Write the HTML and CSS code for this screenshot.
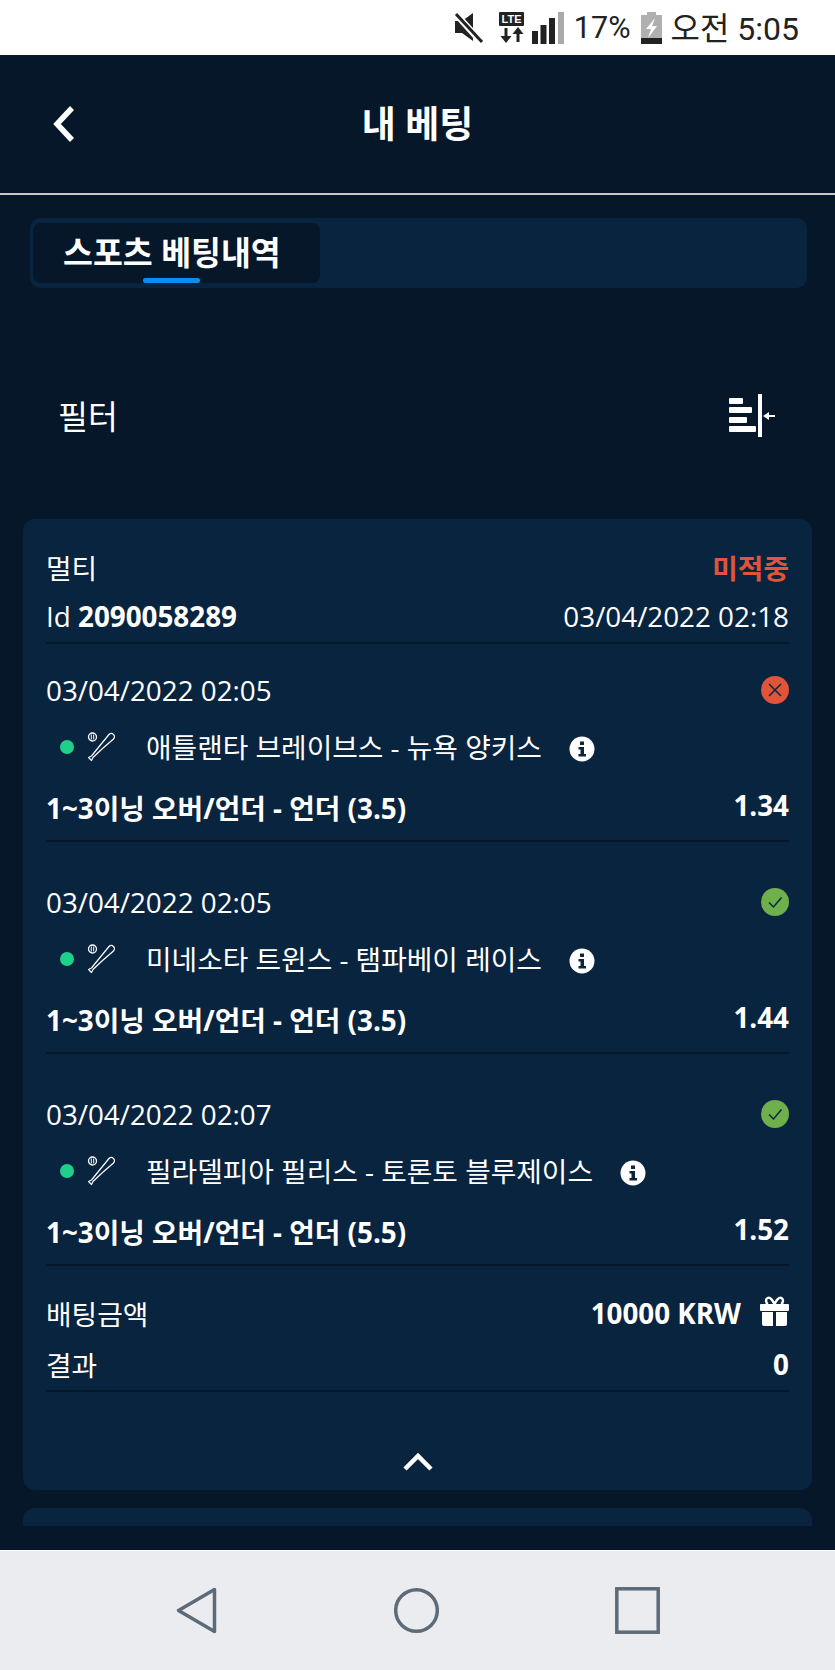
FILE: index.html
```html
<!DOCTYPE html>
<html lang="ko">
<head>
    <meta charset="UTF-8">
    <meta name="viewport" content="width=device-width, initial-scale=1.0">
    <title>내 베팅</title>
    <link rel="stylesheet" href="styles.css">
</head>
<body>
    <div class="status-bar">
        <svg class="ic-mute" width="30" height="32" viewBox="0 0 30 32">
            <path d="M1 9h7l11-8v28L8 21H1z" fill="#222"/>
            <path d="M1 1l27 30" stroke="#fff" stroke-width="6.500"/>
            <path d="M2 2l26 28" stroke="#222" stroke-width="3"/>
        </svg>
        <svg class="ic-lte" width="26" height="32" viewBox="0 0 26 32">
            <rect x="0" y="0" width="25" height="14" rx="1" fill="#222"/>
            <text x="12.500" y="11" class="lte-text" text-anchor="middle">LTE</text>
            <path d="M7 16v10" stroke="#222" stroke-width="3"/>
            <path d="M1.500 24h11L7 31z" fill="#222"/>
            <path d="M19 30V20" stroke="#222" stroke-width="3"/>
            <path d="M13.500 22h11L19 15z" fill="#222"/>
        </svg>
        <svg class="ic-signal" width="32" height="32" viewBox="0 0 32 32">
            <rect x="0" y="19" width="6" height="13" fill="#222"/>
            <rect x="8.500" y="13" width="6" height="19" fill="#222"/>
            <rect x="17" y="6" width="6" height="26" fill="#222"/>
            <rect x="26" y="0" width="6" height="32" fill="#aaa"/>
        </svg>
        <span class="status-pct">17%</span>
        <svg class="ic-batt" width="21" height="32" viewBox="0 0 21 32">
            <path d="M6 0h9v3h6v29H0V3h6z" fill="#b0b0b0"/>
            <rect x="0" y="26" width="21" height="6" fill="#222"/>
            <path d="M14 6L5 17h5l-3 9 9-12h-5z" fill="#fff"/>
        </svg>
        <span class="status-time">오전 5:05</span>
    </div>

    <div class="app">
        <div class="top-bar">
            <svg class="back-btn" width="24" height="38" viewBox="0 0 24 38">
                <path d="M20 3L5 19l15 16" fill="none" stroke="#fff" stroke-width="5.500"/>
            </svg>
            <h1 class="page-title">내 베팅</h1>
        </div>

        <div class="tabs">
            <div class="tab active">스포츠 베팅내역</div>
        </div>

        <div class="filter-row">
            <span class="filter-label">필터</span>
            <svg width="46" height="43" viewBox="0 0 46 43">
                <rect x="0" y="4" width="14" height="6" rx="1" fill="#fff"/>
                <rect x="0" y="13" width="23" height="6" rx="1" fill="#fff"/>
                <rect x="0" y="23" width="18" height="6" rx="1" fill="#fff"/>
                <rect x="0" y="32" width="27" height="6" rx="1" fill="#fff"/>
                <rect x="29" y="0" width="4" height="43" fill="#fff"/>
                <path d="M38 22h8" stroke="#fff" stroke-width="2"/>
                <path d="M34 22l6-4v8z" fill="#fff"/>
            </svg>
        </div>

        <div class="bet-list">
            <div class="card">
                <div class="card-head">
                    <div class="row">
                        <span>멀티</span>
                        <span class="lost-label">미적중</span>
                    </div>
                    <div class="row row-id">
                        <span>Id <b>2090058289</b></span>
                        <span>03/04/2022 02:18</span>
                    </div>
                </div>

                <div class="selection">
                    <div class="row">
                        <span>03/04/2022 02:05</span>
                        <svg class="result-ic" width="28" height="28" viewBox="0 0 28 28">
                            <circle cx="14" cy="14" r="14" fill="#e0553a"/>
                            <path d="M8 8l12 12M20 8L8 20" stroke="#0a2540" stroke-width="1.500"/>
                        </svg>
                    </div>
                    <div class="match">
                        <i class="live-dot"></i>
                        <svg class="bat-ic" width="30" height="32" viewBox="0 0 30 32">
                            <circle cx="5.500" cy="6" r="4" fill="none" stroke="#fff" stroke-width="1.300"/>
                            <path d="M4.300 3.500v5M6.700 3.500v5" stroke="#fff" stroke-width="1"/>
                            <path d="M1.500 26.500L4.500 25 13 14.500 22 3.500c1.500-1.500 3.500-1 4.500 0s1.500 3 0 4.500L15.500 17.500 6 26.500 4.500 29.500z" fill="none" stroke="#fff" stroke-width="1.200" stroke-linejoin="round"/>
                        </svg>
                        <span class="match-name">애틀랜타 브레이브스 - 뉴욕 양키스</span>
                        <svg class="info-ic" width="26" height="26" viewBox="0 0 26 26">
                            <circle cx="13" cy="13" r="12.500" fill="#fff"/>
                            <rect x="11" y="5.500" width="4" height="3.500" fill="#0a2540"/>
                            <path d="M9.500 11h5.500v7h2v2.500H9.500V18h2v-4.500h-2z" fill="#0a2540"/>
                        </svg>
                    </div>
                    <div class="row row-market">
                        <span>1~3이닝 오버/언더 - 언더 (3.5)</span>
                        <span class="odds">1.34</span>
                    </div>
                </div>

                <div class="selection">
                    <div class="row">
                        <span>03/04/2022 02:05</span>
                        <svg class="result-ic" width="28" height="28" viewBox="0 0 28 28">
                            <circle cx="14" cy="14" r="14" fill="#6fb04d"/>
                            <path d="M8 14.500l4.500 4.500L20.500 9.500" fill="none" stroke="#0a2540" stroke-width="1.500"/>
                        </svg>
                    </div>
                    <div class="match">
                        <i class="live-dot"></i>
                        <svg class="bat-ic" width="30" height="32" viewBox="0 0 30 32">
                            <circle cx="5.500" cy="6" r="4" fill="none" stroke="#fff" stroke-width="1.300"/>
                            <path d="M4.300 3.500v5M6.700 3.500v5" stroke="#fff" stroke-width="1"/>
                            <path d="M1.500 26.500L4.500 25 13 14.500 22 3.500c1.500-1.500 3.500-1 4.500 0s1.500 3 0 4.500L15.500 17.500 6 26.500 4.500 29.500z" fill="none" stroke="#fff" stroke-width="1.200" stroke-linejoin="round"/>
                        </svg>
                        <span class="match-name">미네소타 트윈스 - 탬파베이 레이스</span>
                        <svg class="info-ic" width="26" height="26" viewBox="0 0 26 26">
                            <circle cx="13" cy="13" r="12.500" fill="#fff"/>
                            <rect x="11" y="5.500" width="4" height="3.500" fill="#0a2540"/>
                            <path d="M9.500 11h5.500v7h2v2.500H9.500V18h2v-4.500h-2z" fill="#0a2540"/>
                        </svg>
                    </div>
                    <div class="row row-market">
                        <span>1~3이닝 오버/언더 - 언더 (3.5)</span>
                        <span class="odds">1.44</span>
                    </div>
                </div>

                <div class="selection last">
                    <div class="row">
                        <span>03/04/2022 02:07</span>
                        <svg class="result-ic" width="28" height="28" viewBox="0 0 28 28">
                            <circle cx="14" cy="14" r="14" fill="#6fb04d"/>
                            <path d="M8 14.500l4.500 4.500L20.500 9.500" fill="none" stroke="#0a2540" stroke-width="1.500"/>
                        </svg>
                    </div>
                    <div class="match">
                        <i class="live-dot"></i>
                        <svg class="bat-ic" width="30" height="32" viewBox="0 0 30 32">
                            <circle cx="5.500" cy="6" r="4" fill="none" stroke="#fff" stroke-width="1.300"/>
                            <path d="M4.300 3.500v5M6.700 3.500v5" stroke="#fff" stroke-width="1"/>
                            <path d="M1.500 26.500L4.500 25 13 14.500 22 3.500c1.500-1.500 3.500-1 4.500 0s1.500 3 0 4.500L15.500 17.500 6 26.500 4.500 29.500z" fill="none" stroke="#fff" stroke-width="1.200" stroke-linejoin="round"/>
                        </svg>
                        <span class="match-name">필라델피아 필리스 - 토론토 블루제이스</span>
                        <svg class="info-ic" width="26" height="26" viewBox="0 0 26 26">
                            <circle cx="13" cy="13" r="12.500" fill="#fff"/>
                            <rect x="11" y="5.500" width="4" height="3.500" fill="#0a2540"/>
                            <path d="M9.500 11h5.500v7h2v2.500H9.500V18h2v-4.500h-2z" fill="#0a2540"/>
                        </svg>
                    </div>
                    <div class="row row-market">
                        <span>1~3이닝 오버/언더 - 언더 (5.5)</span>
                        <span class="odds">1.52</span>
                    </div>
                </div>

                <div class="summary">
                    <div class="row">
                        <span>배팅금액</span>
                        <span class="stake">
                            <b>10000 KRW</b>
                            <svg width="29" height="30" viewBox="0 0 29 30">
                                <path d="M14.500 8C12 3 9.500 1 7.500 2S5.500 7 8 8M14.500 8c2.500-5 5-7 7-6s2 5-.5 6" fill="none" stroke="#fff" stroke-width="2.500"/>
                                <rect x="0" y="8" width="29" height="7" rx="1" fill="#fff"/>
                                <path d="M2 16h11v14H4a2 2 0 0 1-2-2zM16 16h11v12a2 2 0 0 1-2 2h-9z" fill="#fff"/>
                            </svg>
                        </span>
                    </div>
                    <div class="row row-result">
                        <span>결과</span>
                        <b>0</b>
                    </div>
                </div>

                <div class="toggle">
                    <svg width="30" height="20" viewBox="0 0 30 20">
                        <path d="M2 17L15 4l13 13" fill="none" stroke="#fff" stroke-width="4.500"/>
                    </svg>
                </div>
            </div>

            <div class="card card-next"></div>
        </div>
    </div>

    <div class="nav-bar">
        <svg width="41" height="47" viewBox="0 0 41 47">
            <path d="M38.500 2.500v42L2.500 23.500z" fill="none" stroke="#5c6b77" stroke-width="3.500" stroke-linejoin="round"/>
        </svg>
        <svg width="45" height="47" viewBox="0 0 45 47">
            <circle cx="22.500" cy="23.500" r="20.800" fill="none" stroke="#5c6b77" stroke-width="3.500"/>
        </svg>
        <svg width="45" height="47" viewBox="0 0 45 47">
            <rect x="1.800" y="1.800" width="41.400" height="43.400" fill="none" stroke="#5c6b77" stroke-width="3.500"/>
        </svg>
    </div>
</body>
</html>
```

FILE: styles.css
```css
* {
    box-sizing: border-box;
}

body {
    margin: 0;
    width: 835px;
    height: 1670px;
    overflow: hidden;
    display: flex;
    flex-direction: column;
    font-family: "Open Sans", "Noto Sans CJK KR", sans-serif;
    background: #051728;
    color: #fff;
}

/* phone status bar */
.status-bar {
    height: 55px;
    flex: none;
    background: #fff;
    color: #222;
    display: flex;
    align-items: center;
    justify-content: flex-end;
    padding-right: 36px;
    font-family: Roboto, "Noto Sans CJK KR", sans-serif;
    font-size: 30.500px;
}

.status-time {
    font-size: 32px;
    margin-bottom: 3px;
}

.ic-mute {
    margin-right: 15px;
}

.ic-lte {
    margin-right: 7px;
}

.lte-text {
    font-family: "Liberation Sans", sans-serif;
    font-size: 11px;
    font-weight: 700;
    fill: #fff;
}

.ic-signal {
    margin-right: 10px;
}

.ic-batt {
    margin: 0 8px 0 11px;
}

.app {
    flex: 1;
    display: flex;
    flex-direction: column;
    min-height: 0;
}

/* header */
.top-bar {
    height: 140px;
    flex: none;
    border-bottom: 2px solid #c8c8c8;
    display: flex;
    align-items: center;
    justify-content: center;
    position: relative;
}

.back-btn {
    position: absolute;
    left: 52px;
    top: 50px;
}

.page-title {
    margin: 0 0 4px;
    font-size: 37px;
    font-weight: 700;
}

/* tabs */
.tabs {
    height: 70px;
    flex: none;
    margin: 23px 28px 0 30px;
    padding: 5px 3px;
    background: #09243f;
    border-radius: 10px;
}

.tab {
    width: 287px;
    height: 60px;
    padding: 0 0 4px 30px;
    background: #051728;
    border-radius: 8px;
    display: flex;
    align-items: center;
    font-size: 32.500px;
    font-weight: 700;
    position: relative;
}

.tab.active::after {
    content: "";
    position: absolute;
    left: 110px;
    bottom: 0;
    width: 57px;
    height: 5px;
    background: #0a8cf0;
    border-radius: 2px;
}

/* filter */
.filter-row {
    height: 90px;
    flex: none;
    margin-top: 82px;
    padding: 0 60px 0 58px;
    display: flex;
    align-items: center;
    justify-content: space-between;
}

.filter-label {
    font-size: 32.500px;
}

/* bet cards */
.bet-list {
    margin-top: 59px;
    padding: 0 23px;
    height: 1007px;
    overflow: hidden;
}

.card {
    background: #09243f;
    border-radius: 12px;
    padding: 28px 23px 0 24px;
    font-size: 27.800px;
}

.card-next {
    height: 60px;
    margin-top: 18px;
}

.row {
    height: 40px;
    display: flex;
    align-items: center;
    justify-content: space-between;
}

.lost-label {
    color: #e0553a;
    font-weight: 700;
}

.row-id {
    margin-top: 9px;
}

.card-head {
    margin-left: -1px;
    padding-bottom: 6px;
    border-bottom: 2px solid #051728;
}

.selection {
    margin-left: -1px;
    padding: 26px 0 13px;
    margin-bottom: 14px;
    border-bottom: 2px solid #051728;
}

.selection.last {
    margin-bottom: 0;
}

.match {
    height: 40px;
    margin-top: 17px;
    display: flex;
    align-items: center;
}

.match-name {
    margin-bottom: 3px;
}

.live-dot {
    width: 14px;
    height: 14px;
    margin-left: 14px;
    border-radius: 50%;
    background: #1fd08b;
    flex: none;
}

.bat-ic {
    margin: 0 29px 0 13px;
    flex: none;
}

.info-ic {
    margin: 4px 0 0 27px;
    flex: none;
}

.row-market {
    margin-top: 20px;
    font-weight: 700;
}

.odds {
    margin-bottom: 4px;
}

.summary {
    margin-left: -1px;
    padding: 27px 0 6px;
    border-bottom: 2px solid #051728;
}

.stake {
    display: flex;
    align-items: center;
    gap: 19px;
}

.stake svg {
    margin-bottom: 4px;
}

.row-result {
    margin-top: 11px;
}

.toggle {
    height: 98px;
    padding-top: 60px;
    display: flex;
    justify-content: center;
    align-items: flex-start;
}

/* android buttons */
.nav-bar {
    height: 120px;
    flex: none;
    background: #ebecf0;
    border-top: 1px solid #fff;
    display: flex;
    align-items: center;
    padding: 0 175px 0 176px;
    justify-content: space-between;
}
```
